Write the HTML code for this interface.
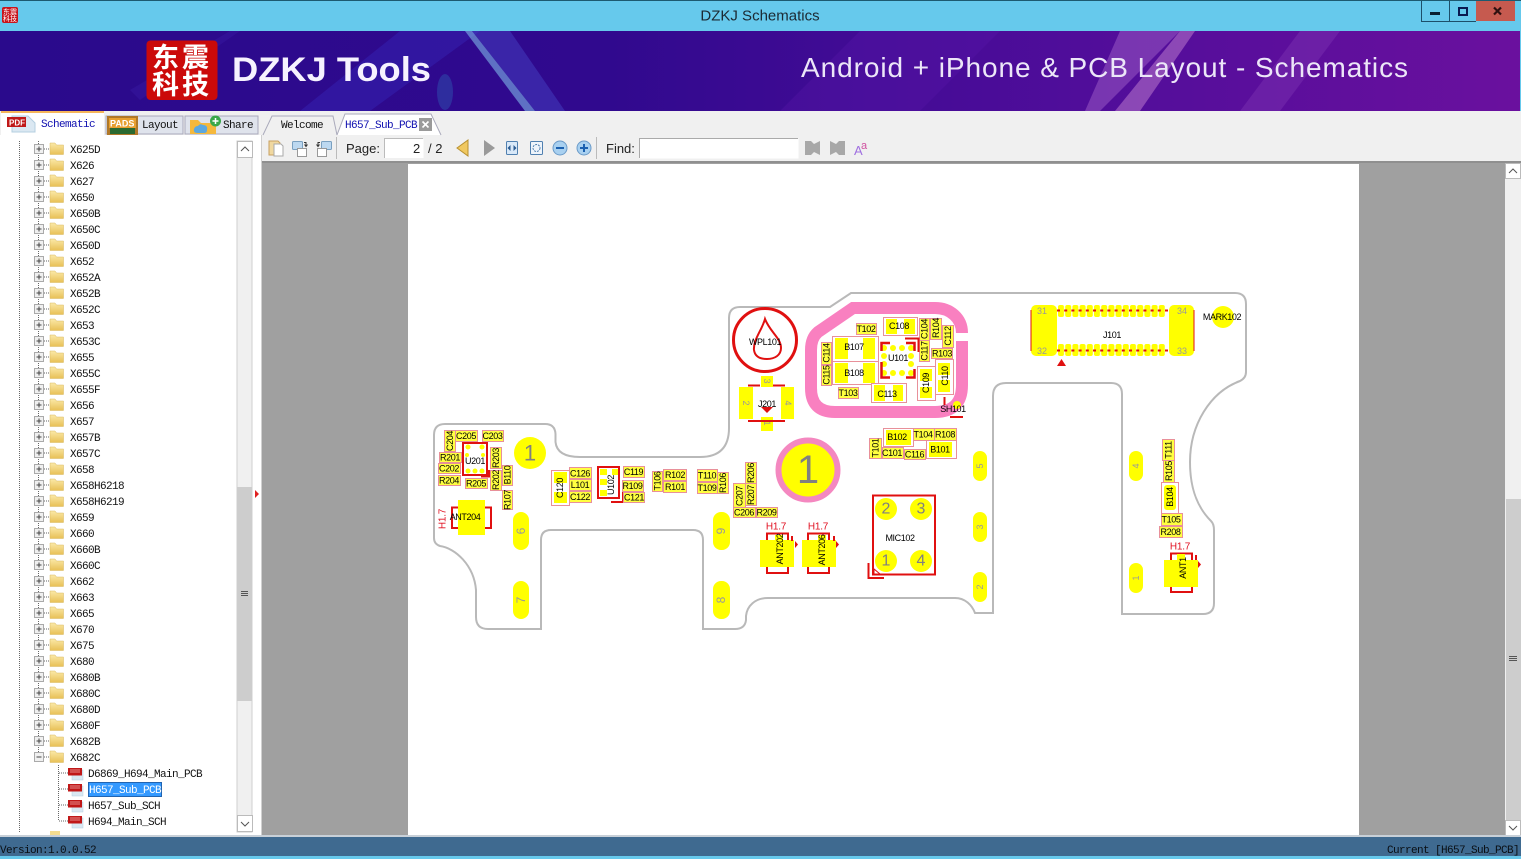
<!DOCTYPE html>
<html><head><meta charset="utf-8"><title>DZKJ Schematics</title>
<style>
html,body{margin:0;padding:0;background:#66c9ec;width:1521px;height:859px;overflow:hidden}
svg{display:block;position:absolute;left:0;top:0}
.m{font-family:"Liberation Mono",monospace;font-size:11px;letter-spacing:-.6px;fill:#111}
.s{font-family:"Liberation Sans",sans-serif;font-size:13px;fill:#222}
.t{font-family:"Liberation Sans",sans-serif;font-size:9px;letter-spacing:-.4px;fill:#000;text-anchor:middle;dominant-baseline:central}
.n{font-family:"Liberation Sans",sans-serif;font-size:9px;fill:#999;text-anchor:middle;dominant-baseline:central}
.h{font-family:"Liberation Sans",sans-serif;font-size:10px;letter-spacing:-.2px;fill:#e01020;text-anchor:middle;dominant-baseline:central}
.b{font-family:"Liberation Sans",sans-serif;fill:#808080;text-anchor:middle;dominant-baseline:central}
.l{fill:#ffff40;stroke:#e8909a;stroke-width:1}
.o{fill:#fff;stroke:#e8909a;stroke-width:1}
.y{fill:#ffff00}
.r{fill:none;stroke:#e01010;stroke-width:2}
.d{stroke:#666;stroke-width:1;stroke-dasharray:1 1;fill:none}
</style></head><body>
<svg width="1521" height="859" viewBox="0 0 1521 859" xmlns="http://www.w3.org/2000/svg">
<defs>
<linearGradient id="bn" x1="0" x2="1" y1="0" y2="0"><stop offset="0" stop-color="#2a0a8c"/><stop offset=".4" stop-color="#30098e"/><stop offset=".7" stop-color="#4f0d9a"/><stop offset="1" stop-color="#6a109e"/></linearGradient>
<linearGradient id="fd" x1="0" x2="0" y1="0" y2="1"><stop offset="0" stop-color="#fbe9a8"/><stop offset="1" stop-color="#e8c056"/></linearGradient>
<pattern id="th" x="1058" y="305" width="7.2" height="39" patternUnits="userSpaceOnUse"><rect width="6" height="12" rx="2" fill="#ffff00"/></pattern>
<g id="f"><path d="M50 -6h5l1.500 2h7v9.500h-13.500z" fill="url(#fd)" stroke="#d8b860" stroke-width=".5"/></g>
<g id="e"><rect x="34.500" y="-4.500" width="9" height="9" fill="#f0f0f0" stroke="#aaa"/><path d="M36.500 0h5M39 -2.500v5" stroke="#444"/><path d="M44 0h6" class="d"/><use href="#f"/></g>
<g id="c"><rect x="34.500" y="-4.500" width="9" height="9" fill="#f0f0f0" stroke="#aaa"/><path d="M36.500 0h5" stroke="#444"/><path d="M44 0h6" class="d"/><use href="#f"/></g>
<g id="p"><path d="M59 0h9" class="d"/><rect x="72" y="-3" width="11" height="10" fill="#d9e8f2" stroke="#b5cfe0" stroke-width=".5"/><rect x="68" y="-5" width="14" height="7.500" fill="#c01818"/><path d="M70 -3h10M70 -1h10" stroke="#f2b0b0" stroke-width=".8"/></g>
</defs>

<!-- title bar -->
<rect width="1521" height="859" fill="#66c9ec"/>
<rect width="1521" height="1" fill="#1d5a70"/>
<rect x="2" y="7" width="16" height="16" rx="2" fill="#c8141c"/>
<text x="3" y="14" font-family="'Noto Sans CJK SC',sans-serif" font-size="7" fill="#fff">东震</text>
<text x="3" y="21" font-family="'Noto Sans CJK SC',sans-serif" font-size="7" fill="#fff">科技</text>
<text x="760" y="20.500" text-anchor="middle" font-family="'Liberation Sans',sans-serif" font-size="15" fill="#1c2a33">DZKJ Schematics</text>
<rect x="1476" y="1" width="39" height="20" fill="#c65a4f"/>
<path d="M1421.500 1V21.500H1476M1449.500 1V21.500" fill="none" stroke="#1d4f6a"/>
<rect x="1430" y="12" width="10" height="3" fill="#0a2030"/>
<rect x="1459" y="8" width="8" height="7" fill="none" stroke="#0a1a50" stroke-width="2"/>
<path d="M1494 7.500l7 7M1501 7.500l-7 7" stroke="#301010" stroke-width="2.200"/>

<!-- banner -->
<rect x="0" y="31" width="1520" height="80" fill="url(#bn)"/>
<path d="M300 111L400 31H480L370 111Z" fill="#3420b0" opacity=".55"/>
<path d="M130 90L230 31H240L140 100Z" fill="#3c20a8" opacity=".35"/>
<path d="M465 31H472L535 111H525Z" fill="#7fb8e8" opacity=".6"/>
<path d="M472 31H510L565 111H535Z" fill="#4a50d0" opacity=".4"/>
<ellipse cx="445" cy="92" rx="8" ry="18" fill="#2f80c8" opacity=".3"/>
<path d="M1120 31H1180L1100 111H1085Z" fill="#a060c8" opacity=".5"/>
<path d="M1180 31H1195L1140 111H1115Z" fill="#d090d8" opacity=".45"/>
<path d="M1300 31H1340L1280 111H1240Z" fill="#7a30b0" opacity=".5"/>
<path d="M780 111L860 31H1000L920 111Z" fill="#5a18a8" opacity=".35"/>
<rect x="146.500" y="40.500" width="71" height="59.500" rx="4" fill="#cb0a0a"/>
<text x="152" y="67" font-family="'Noto Sans CJK SC',sans-serif" font-weight="700" font-size="27" letter-spacing="3" fill="#fff">东震</text>
<text x="152" y="94" font-family="'Noto Sans CJK SC',sans-serif" font-weight="700" font-size="27" letter-spacing="3" fill="#fff">科技</text>
<text x="232" y="81" font-family="'Liberation Sans',sans-serif" font-weight="700" font-size="34" fill="#f6f2ff" textLength="199" lengthAdjust="spacingAndGlyphs">DZKJ Tools</text>
<text x="801" y="77" font-family="'Liberation Sans',sans-serif" font-size="28" fill="#ece6f8" textLength="607" lengthAdjust="spacing">Android + iPhone &amp; PCB Layout - Schematics</text>

<!-- tabs row -->
<rect x="0" y="111" width="1521" height="726" fill="#f0f0f0"/>
<rect x="1" y="112" width="103" height="24" fill="#fff"/>
<rect x="1" y="111" width="103" height="2" fill="#f5b55a"/>
<path d="M106 134V116h77v18zM185 134V116h73v18z" fill="#dfe3ec" stroke="#aab"/>
<path d="M12 128V116h16l7 7v9H12z" fill="#dbe8f2" stroke="#b5cfe0"/>
<rect x="7" y="117" width="19" height="10" fill="#c01818"/>
<text x="9" y="125.500" font-family="'Liberation Sans',sans-serif" font-size="8" font-weight="700" fill="#fff">PDF</text>
<text x="41" y="127" class="m" style="fill:#1010b0">Schematic</text>
<rect x="107" y="116" width="31" height="19" fill="#b07828"/>
<rect x="109" y="118" width="27" height="10" fill="#e8a030"/>
<rect x="110" y="128" width="25" height="6" fill="#2a6a30"/>
<text x="110" y="126.500" font-family="'Liberation Sans',sans-serif" font-size="9" font-weight="700" fill="#fff">PADS</text>
<text x="142" y="128" class="m">Layout</text>
<path d="M190 120h8l3 3h15v11h-26z" fill="#f5b83c"/>
<path d="M198 133q-5 0 -4 -4q1 -3 4 -3q2 -3 5 -1q5 0 4 5q0 3 -3 3z" fill="#5ca8e0"/>
<circle cx="215.500" cy="121" r="5.500" fill="#3aa84a"/>
<path d="M212.500 121h6M215.500 118v6" stroke="#fff" stroke-width="1.500"/>
<text x="223" y="128" class="m">Share</text>
<path d="M263 135L272 116H333L337 135" fill="#f0f0f0" stroke="#aab"/>
<path d="M337 135L345 114H431L441 135" fill="#fff" stroke="#aab"/>
<text x="281" y="128" class="m">Welcome</text>
<text x="345" y="128" class="m" style="fill:#1010b0">H657_Sub_PCB</text>
<rect x="419" y="118" width="13" height="13" fill="#9a9a9a"/>
<path d="M422.500 121.500l6 6M428.500 121.500l-6 6" stroke="#fff" stroke-width="1.600"/>

<!-- tree -->
<rect x="0" y="135" width="261" height="700" fill="#fff"/>
<rect x="261" y="135" width="1" height="700" fill="#d0d0d0"/>
<path d="M19.500 141V832M38.500 141V757" class="d"/>
<path d="M58.500 765V821" class="d"/>
<use href="#e" y="149"/><text x="70" y="153" class="m">X625D</text>
<use href="#e" y="165"/><text x="70" y="169" class="m">X626</text>
<use href="#e" y="181"/><text x="70" y="185" class="m">X627</text>
<use href="#e" y="197"/><text x="70" y="201" class="m">X650</text>
<use href="#e" y="213"/><text x="70" y="217" class="m">X650B</text>
<use href="#e" y="229"/><text x="70" y="233" class="m">X650C</text>
<use href="#e" y="245"/><text x="70" y="249" class="m">X650D</text>
<use href="#e" y="261"/><text x="70" y="265" class="m">X652</text>
<use href="#e" y="277"/><text x="70" y="281" class="m">X652A</text>
<use href="#e" y="293"/><text x="70" y="297" class="m">X652B</text>
<use href="#e" y="309"/><text x="70" y="313" class="m">X652C</text>
<use href="#e" y="325"/><text x="70" y="329" class="m">X653</text>
<use href="#e" y="341"/><text x="70" y="345" class="m">X653C</text>
<use href="#e" y="357"/><text x="70" y="361" class="m">X655</text>
<use href="#e" y="373"/><text x="70" y="377" class="m">X655C</text>
<use href="#e" y="389"/><text x="70" y="393" class="m">X655F</text>
<use href="#e" y="405"/><text x="70" y="409" class="m">X656</text>
<use href="#e" y="421"/><text x="70" y="425" class="m">X657</text>
<use href="#e" y="437"/><text x="70" y="441" class="m">X657B</text>
<use href="#e" y="453"/><text x="70" y="457" class="m">X657C</text>
<use href="#e" y="469"/><text x="70" y="473" class="m">X658</text>
<use href="#e" y="485"/><text x="70" y="489" class="m">X658H6218</text>
<use href="#e" y="501"/><text x="70" y="505" class="m">X658H6219</text>
<use href="#e" y="517"/><text x="70" y="521" class="m">X659</text>
<use href="#e" y="533"/><text x="70" y="537" class="m">X660</text>
<use href="#e" y="549"/><text x="70" y="553" class="m">X660B</text>
<use href="#e" y="565"/><text x="70" y="569" class="m">X660C</text>
<use href="#e" y="581"/><text x="70" y="585" class="m">X662</text>
<use href="#e" y="597"/><text x="70" y="601" class="m">X663</text>
<use href="#e" y="613"/><text x="70" y="617" class="m">X665</text>
<use href="#e" y="629"/><text x="70" y="633" class="m">X670</text>
<use href="#e" y="645"/><text x="70" y="649" class="m">X675</text>
<use href="#e" y="661"/><text x="70" y="665" class="m">X680</text>
<use href="#e" y="677"/><text x="70" y="681" class="m">X680B</text>
<use href="#e" y="693"/><text x="70" y="697" class="m">X680C</text>
<use href="#e" y="709"/><text x="70" y="713" class="m">X680D</text>
<use href="#e" y="725"/><text x="70" y="729" class="m">X680F</text>
<use href="#e" y="741"/><text x="70" y="745" class="m">X682B</text>
<use href="#c" y="757"/><text x="70" y="761" class="m">X682C</text>
<use href="#p" y="773"/><text x="88" y="777" class="m">D6869_H694_Main_PCB</text>
<rect x="88" y="782" width="74" height="15" fill="#3399ff"/>
<rect x="88.500" y="782.500" width="73" height="14" fill="none" stroke="#103060" stroke-dasharray="1 1"/>
<use href="#p" y="789"/><text x="89" y="793" class="m" style="fill:#fff">H657_Sub_PCB</text>
<use href="#p" y="805"/><text x="88" y="809" class="m">H657_Sub_SCH</text>
<use href="#p" y="821"/><text x="88" y="825" class="m">H694_Main_SCH</text>
<rect x="50" y="831" width="10" height="4" fill="#f3dc90"/>
<!-- tree scrollbar -->
<rect x="237" y="141" width="15" height="691" fill="#f0f0f0" stroke="#cfcfcf"/>
<rect x="237.500" y="141.500" width="15" height="16" fill="#fff" stroke="#bbb"/>
<rect x="237.500" y="815.500" width="15" height="16" fill="#fff" stroke="#bbb"/>
<path d="M241 151l4 -4l4 4M241 822l4 4l4 -4" fill="none" stroke="#555"/>
<rect x="237" y="487" width="15" height="214" fill="#cdcdcd"/>
<path d="M241 591.500h7M241 593.500h7M241 595.500h7" stroke="#555"/>
<path d="M255 490l4 4l-4 4z" fill="#e02020"/>

<!-- toolbar -->
<path d="M269 141h9l2 2v12h-11z" fill="#f0d8a0" stroke="#c8a060"/>
<path d="M274 144h7l2 2v10h-9z" fill="#fff" stroke="#aaa"/>
<rect x="292.500" y="141.500" width="10" height="8" rx="1" fill="#bcd8f0" stroke="#7aa0c0"/>
<rect x="297.500" y="148.500" width="9" height="8" fill="#fff" stroke="#999"/>
<path d="M304 142.500h2v3M304.500 144.500l1.500 2l1.500 -2" fill="none" stroke="#333"/>
<rect x="321.500" y="141.500" width="10" height="8" rx="1" fill="#bcd8f0" stroke="#7aa0c0"/>
<rect x="317.500" y="148.500" width="9" height="8" fill="#fff" stroke="#999"/>
<path d="M320 142.500h-2v3M316.500 144.500l1.500 2l1.500 -2" fill="none" stroke="#333"/>
<rect x="336" y="137" width="1" height="22" fill="#bbb"/>
<text x="346" y="153" class="s">Page:</text>
<rect x="384.500" y="139" width="39" height="19" fill="#fff"/>
<path d="M384.500 158V138.500H423" fill="none" stroke="#bbb"/>
<text x="413" y="153" class="s">2</text>
<text x="428" y="153" class="s">/ 2</text>
<path d="M468 140V156L457 148Z" fill="#f0c860" stroke="#b89030"/>
<path d="M484 140V156L495 148Z" fill="#9a9a9a"/>
<rect x="506.500" y="141.500" width="11" height="13" rx="1" fill="#d8e8f8" stroke="#5080b0"/>
<path d="M507.500 148l3 -3v6zM516.500 148l-3 -3v6z" fill="#2a5a90"/>
<rect x="530.500" y="141.500" width="12" height="13" rx="1" fill="#eef4fb" stroke="#5080b0"/>
<circle cx="536.500" cy="148" r="3.500" fill="none" stroke="#5080b0" stroke-dasharray="2 1"/>
<circle cx="560" cy="148" r="7" fill="#a8d0f0" stroke="#6a9ac8"/>
<path d="M556 148h8" stroke="#1a60b0" stroke-width="2"/>
<circle cx="584" cy="148" r="7" fill="#a8d0f0" stroke="#6a9ac8"/>
<path d="M580 148h8M584 144v8" stroke="#1a60b0" stroke-width="2"/>
<rect x="596" y="137" width="1" height="22" fill="#bbb"/>
<text x="606" y="153" class="s">Find:</text>
<rect x="639.500" y="138.500" width="159" height="20" fill="#fff"/>
<path d="M639.500 158V138.500H798" fill="none" stroke="#aaa"/>
<path d="M805 141H811L814 144L820 141V155L814 152L811 155H805Z" fill="#a8a8a8"/>
<path d="M845 141H839L836 144L830 141V155L836 152L839 155H845Z" fill="#a8a8a8"/>
<text x="854" y="155" font-family="'Liberation Sans',sans-serif" font-size="13" fill="#a070e0">A</text>
<text x="861" y="149" font-family="'Liberation Sans',sans-serif" font-size="11" fill="#d050a0">a</text>

<!-- viewer -->
<rect x="262" y="161" width="1243" height="675" fill="#a0a0a0"/>
<rect x="262" y="161" width="1259" height="2" fill="#8f8f8f"/>
<rect x="408" y="164" width="951" height="671" fill="#fff"/>
<rect x="1505" y="163" width="16" height="673" fill="#f0f0f0"/>
<rect x="1505.500" y="163.500" width="15" height="15" fill="#fff" stroke="#bbb"/>
<rect x="1505.500" y="820.500" width="15" height="15" fill="#fff" stroke="#bbb"/>
<path d="M1509 173l4 -4l4 4M1509 826l4 4l4 -4" fill="none" stroke="#555"/>
<rect x="1506" y="499" width="15" height="321" fill="#cdcdcd"/>
<path d="M1509 656.500h8M1509 658.500h8M1509 660.500h8" stroke="#555"/>

<!-- PCB outline -->
<path d="M445 424H545Q555 424 555.500 434V442Q557 457 580 457H700Q729 457 729 428V318Q729 307 740 307H830L851 293H1235Q1246 293 1246 304V372Q1246 378 1240 381C1210 392 1190 425 1190 462C1190 490 1198 508 1211 521Q1214 524 1214 530V603Q1214 614 1203 614H1122V394Q1122 383 1111 383H1006Q993 383 993 396V613H975C972 605 965 598 955 598H768C755 598 747 606 746 616V620Q745 629 735 629H703V540Q703 530 693 530H551Q541 530 541 540V629H488Q476 629 476 617V590C474 565 455 548 440 546Q434 544 434 538V435Q434 424 445 424Z" fill="none" stroke="#b9b9b9" stroke-width="2"/>

<!-- pink shield -->
<path d="M962 333C962 318 950 308 935 308H853L818 332Q811 338 811 350V388Q811 412 835 412H935Q962 412 962 385V341" fill="none" stroke="#f980c0" stroke-width="12"/>

<!-- big 1 and small 1 -->
<circle cx="808" cy="470" r="29.500" fill="#ffff00" stroke="#f488c0" stroke-width="6"/>
<text x="808" y="470" class="b" font-size="40">1</text>
<circle cx="530" cy="453" r="16" fill="#ffff00"/>
<text x="530" y="453" class="b" font-size="22">1</text>

<!-- numbered pads -->
<rect x="513" y="512" width="16" height="38" rx="8" class="y"/><text class="n" transform="rotate(-90 521 531)" x="521" y="531" style="font-size:12px">6</text>
<rect x="513" y="581" width="16" height="38" rx="8" class="y"/><text class="n" transform="rotate(-90 521 600)" x="521" y="600" style="font-size:12px">7</text>
<rect x="713" y="512" width="17" height="38" rx="8" class="y"/><text class="n" transform="rotate(-90 721 531)" x="721" y="531" style="font-size:12px">9</text>
<rect x="713" y="581" width="17" height="38" rx="8" class="y"/><text class="n" transform="rotate(-90 721 600)" x="721" y="600" style="font-size:12px">8</text>
<rect x="973" y="451" width="14" height="30" rx="7" class="y"/><text class="n" transform="rotate(-90 980 466)" x="980" y="466">5</text>
<rect x="973" y="512" width="14" height="30" rx="7" class="y"/><text class="n" transform="rotate(-90 980 527)" x="980" y="527">3</text>
<rect x="973" y="572" width="14" height="30" rx="7" class="y"/><text class="n" transform="rotate(-90 980 587)" x="980" y="587">2</text>
<rect x="1129" y="451" width="14" height="30" rx="7" class="y"/><text class="n" transform="rotate(-90 1136 466)" x="1136" y="466">4</text>
<rect x="1129" y="563" width="14" height="30" rx="7" class="y"/><text class="n" transform="rotate(-90 1136 578)" x="1136" y="578">1</text>

<!-- left cluster -->
<rect class="l" x="444.500" y="430.500" width="11" height="21"/><text class="t" transform="rotate(-90 450 441)" x="450" y="441">C204</text>
<rect class="l" x="455.500" y="430.500" width="22" height="11"/><text class="t" x="466" y="436">C205</text>
<rect class="l" x="482.500" y="430.500" width="21" height="11"/><text class="t" x="492.500" y="436">C203</text>
<rect class="l" x="439.500" y="452.500" width="22" height="10"/><text class="t" x="450" y="457.500">R201</text>
<rect class="l" x="438.500" y="463.500" width="22" height="10"/><text class="t" x="449" y="468.500">C202</text>
<rect class="l" x="438.500" y="475.500" width="22" height="10"/><text class="t" x="449" y="480.500">R204</text>
<rect x="463" y="443" width="24" height="32" fill="#fff" stroke="#e01010" stroke-width="2"/>
<circle cx="468" cy="447" r="2.500" class="y"/><circle cx="482" cy="447" r="2.500" class="y"/><circle cx="468" cy="471" r="2.500" class="y"/><circle cx="475" cy="471" r="2.500" class="y"/><circle cx="482" cy="471" r="2.500" class="y"/><circle cx="467" cy="455" r="2" class="y"/><circle cx="483" cy="455" r="2" class="y"/>
<text class="t" x="475" y="461">U201</text>
<path d="M481 476.500H489V470" class="r"/>
<rect class="l" x="490.500" y="447.500" width="11" height="21"/><text class="t" transform="rotate(-90 496 458)" x="496" y="458">R203</text>
<rect class="l" x="490.500" y="470.500" width="11" height="20"/><text class="t" transform="rotate(-90 496 480)" x="496" y="480">R202</text>
<rect class="l" x="502.500" y="465.500" width="10" height="20"/><text class="t" transform="rotate(-90 507.500 475)" x="507.500" y="475">B110</text>
<rect class="l" x="502.500" y="490.500" width="10" height="19"/><text class="t" transform="rotate(-90 507.500 500)" x="507.500" y="500">R107</text>
<rect class="l" x="465.500" y="478.500" width="22" height="10"/><text class="t" x="476" y="483.500">R205</text>
<!-- ANT204 -->
<path d="M458 507.500H452V528H458M485 507.500H491V528H485" class="r"/>
<rect x="458" y="500" width="27" height="35" class="y"/>
<text class="t" x="465" y="517">ANT204</text>
<text class="h" transform="rotate(-90 443 519)" x="443" y="519">H1.7</text>

<!-- middle cluster -->
<rect class="o" x="551.500" y="470.500" width="18" height="35"/>
<rect x="554" y="472" width="13" height="11" class="y"/><rect x="554" y="492" width="13" height="11" class="y"/>
<text class="t" transform="rotate(-90 560 488)" x="560" y="488">C120</text>
<rect class="l" x="569.500" y="467.500" width="22" height="11"/><text class="t" x="580" y="473.500">C126</text>
<rect class="l" x="569.500" y="479.500" width="22" height="11"/><text class="t" x="580" y="485">L101</text>
<rect class="l" x="569.500" y="491.500" width="22" height="11"/><text class="t" x="580" y="497">C122</text>
<rect x="598" y="467" width="21" height="31" fill="#fff" stroke="#e01010" stroke-width="2"/>
<rect x="600" y="469" width="7" height="6" class="y"/><rect x="612" y="469" width="6" height="6" class="y"/><rect x="600" y="479" width="7" height="6" class="y"/><rect x="600" y="490" width="7" height="6" class="y"/>
<text class="t" transform="rotate(-90 611 485)" x="611" y="485">U102</text>
<path d="M611 502H623V492" class="r"/>
<rect class="l" x="623.500" y="466.500" width="21" height="11"/><text class="t" x="633.500" y="472">C119</text>
<rect class="l" x="622.500" y="480.500" width="21" height="11"/><text class="t" x="632.500" y="486">R109</text>
<rect class="l" x="623.500" y="492.500" width="21" height="10"/><text class="t" x="634" y="497.500">C121</text>
<rect class="l" x="652.500" y="471.500" width="10" height="20"/><text class="t" transform="rotate(-90 657.500 481)" x="657.500" y="481">T106</text>
<rect class="l" x="663.500" y="469.500" width="23" height="11"/><text class="t" x="675" y="475">R102</text>
<rect class="l" x="663.500" y="481.500" width="23" height="11"/><text class="t" x="675" y="487">R101</text>
<rect class="l" x="697.500" y="469.500" width="20" height="12"/><text class="t" x="707" y="475.500">T110</text>
<rect class="l" x="697.500" y="482.500" width="20" height="11"/><text class="t" x="707" y="488">T109</text>
<rect class="l" x="717.500" y="472.500" width="11" height="21"/><text class="t" transform="rotate(-90 723 483)" x="723" y="483">R106</text>
<rect class="l" x="745.500" y="462.500" width="11" height="21"/><text class="t" transform="rotate(-90 751 473)" x="751" y="473">R206</text>
<rect class="l" x="733.500" y="483.500" width="12" height="24"/><text class="t" transform="rotate(-90 739.500 496)" x="739.500" y="496">C207</text>
<rect class="l" x="745.500" y="483.500" width="11" height="22"/><text class="t" transform="rotate(-90 751 495)" x="751" y="495">R207</text>
<rect class="l" x="733.500" y="507.500" width="22" height="10"/><text class="t" x="744" y="512.500">C206</text>
<rect class="l" x="756.500" y="507.500" width="21" height="10"/><text class="t" x="766.500" y="512.500">R209</text>

<!-- WPL101 -->
<circle cx="765" cy="340" r="31.500" fill="none" stroke="#e01010" stroke-width="3"/>
<path d="M765 319C762 330 753 340 754 350C755 357 761 359 767 359C775 359 781 355 781 348C781 338 770 332 765 319Z" fill="none" stroke="#e01010" stroke-width="2"/>
<text class="t" x="765" y="342">WPL101</text>
<!-- J201 -->
<rect x="739" y="387" width="14" height="32" class="y"/><rect x="781" y="387" width="13" height="32" class="y"/>
<rect x="761" y="376" width="12" height="11" class="y"/><rect x="761" y="417" width="12" height="14" class="y"/>
<text class="n" transform="rotate(90 746 403)" x="746" y="403">2</text><text class="n" transform="rotate(90 788 403)" x="788" y="403">4</text>
<text class="n" transform="rotate(90 767 381)" x="767" y="381">3</text><text class="n" transform="rotate(90 767 423)" x="767" y="423">1</text>
<path d="M748 385.500H760M773 385.500H785M748 421H785" class="r"/>
<path d="M761 407H773L767 413Z" fill="#e01010"/>
<text class="t" x="767" y="404">J201</text>

<!-- shield contents -->
<rect class="o" x="832.500" y="336.500" width="46" height="25"/><rect x="835" y="338" width="13" height="21" class="y"/><rect x="863" y="338" width="12" height="21" class="y"/><text class="t" x="854" y="347">B107</text>
<rect class="o" x="832.500" y="361.500" width="46" height="23"/><rect x="835" y="363" width="13" height="20" class="y"/><rect x="863" y="363" width="12" height="20" class="y"/><text class="t" x="854" y="373">B108</text>
<rect class="l" x="821.500" y="342.500" width="10" height="22"/><text class="t" transform="rotate(-90 826.500 353)" x="826.500" y="353">C114</text>
<rect class="l" x="821.500" y="365.500" width="10" height="20"/><text class="t" transform="rotate(-90 826.500 375)" x="826.500" y="375">C115</text>
<rect class="l" x="856.500" y="323.500" width="20" height="11"/><text class="t" x="866" y="329">T102</text>
<rect class="l" x="838.500" y="387.500" width="20" height="11"/><text class="t" x="848" y="393">T103</text>
<rect class="o" x="883.500" y="317.500" width="34" height="18"/><rect x="886" y="319" width="11" height="15" class="y"/><rect x="904" y="319" width="11" height="15" class="y"/><text class="t" x="899" y="326">C108</text>
<rect class="l" x="919.500" y="318.500" width="10" height="22"/><text class="t" transform="rotate(-90 924.500 329)" x="924.500" y="329">C104</text>
<rect class="l" x="930.500" y="318.500" width="11" height="21"/><text class="t" transform="rotate(-90 936 328)" x="936" y="328">R104</text>
<rect class="l" x="942.500" y="325.500" width="11" height="22"/><text class="t" transform="rotate(-90 948 336)" x="948" y="336">C112</text>
<rect class="l" x="919.500" y="340.500" width="10" height="21"/><text class="t" transform="rotate(-90 924.500 351)" x="924.500" y="351">C117</text>
<rect class="l" x="931.500" y="348.500" width="21" height="10"/><text class="t" x="942" y="353.500">R103</text>
<rect x="881" y="342" width="34" height="36" fill="#fff"/>
<g class="y"><circle cx="884" cy="348" r="3"/><circle cx="893" cy="348" r="3"/><circle cx="902" cy="348" r="3"/><circle cx="911" cy="348" r="3"/><circle cx="884" cy="356" r="3"/><circle cx="911" cy="356" r="3"/><circle cx="884" cy="364" r="3"/><circle cx="911" cy="364" r="3"/><circle cx="884" cy="373" r="3"/><circle cx="893" cy="373" r="3"/><circle cx="902" cy="373" r="3"/><circle cx="911" cy="373" r="3"/></g>
<path d="M881.500 351V343H890M906 343H914.500V351M881.500 362V377.500H890M906 377.500H914.500V369" fill="none" stroke="#e01010" stroke-width="2.500"/>
<path d="M905 338.500H918.500V352" class="r"/>
<text class="t" x="898" y="358">U101</text>
<rect class="o" x="871.500" y="383.500" width="35" height="19"/><rect x="874" y="385" width="11" height="16" class="y"/><rect x="893" y="385" width="10" height="16" class="y"/><text class="t" x="887" y="394">C113</text>
<rect class="o" x="917.500" y="366.500" width="18" height="34"/><rect x="920" y="369" width="12" height="12" class="y"/><rect x="920" y="387" width="12" height="11" class="y"/><text class="t" transform="rotate(-90 926 383)" x="926" y="383">C109</text>
<rect class="o" x="935.500" y="359.500" width="18" height="35"/><rect x="938" y="363" width="12" height="12" class="y"/><rect x="938" y="380" width="12" height="12" class="y"/><text class="t" transform="rotate(-90 945 376)" x="945" y="376">C110</text>
<circle cx="957" cy="405" r="4" class="y"/>
<path d="M944.500 397V405M950 417H963" class="r"/>
<text class="t" x="953" y="409">SH101</text>

<!-- lower cluster -->
<rect class="l" x="869.500" y="438.500" width="12" height="20"/><text class="t" transform="rotate(-90 875.500 448)" x="875.500" y="448">T101</text>
<rect class="o" x="883.500" y="428.500" width="30" height="18"/><rect x="886" y="430" width="25" height="15" class="y"/><text class="t" x="897" y="437">B102</text>
<rect class="l" x="913.500" y="428.500" width="21" height="12"/><text class="t" x="923" y="434.500">T104</text>
<rect class="l" x="934.500" y="428.500" width="22" height="12"/><text class="t" x="945" y="434.500">R108</text>
<rect class="l" x="882.500" y="447.500" width="21" height="11"/><text class="t" x="892" y="453">C101</text>
<rect class="l" x="904.500" y="449.500" width="21" height="10"/><text class="t" x="914.500" y="454.500">C116</text>
<rect class="o" x="926.500" y="440.500" width="30" height="18"/><rect x="929" y="442" width="23" height="15" class="y"/><text class="t" x="940" y="449.500">B101</text>

<!-- J101 -->
<rect x="1031" y="305" width="26" height="51" rx="5" class="y"/>
<rect x="1169" y="305" width="25" height="51" rx="5" class="y"/>
<rect x="1058" y="305" width="108" height="12" fill="url(#th)"/>
<rect x="1058" y="344" width="108" height="12" fill="url(#th)"/>
<path d="M1057 310.500H1169M1057 350.500H1169" stroke="#e01010" stroke-width="2" stroke-dasharray="3 4.200" fill="none"/>
<path d="M1031 310V351M1194 310V351" stroke="#e01010" stroke-width="1" fill="none"/>
<text class="n" x="1042" y="311">31</text><text class="n" x="1042" y="351">32</text><text class="n" x="1182" y="311">34</text><text class="n" x="1182" y="351">33</text>
<text class="t" x="1112" y="335">J101</text>
<path d="M1061.500 359L1066 366H1057Z" fill="#e01010"/>
<circle cx="1223" cy="317" r="11" class="y"/>
<text class="t" x="1222" y="317">MARK102</text>

<!-- MIC102 -->
<rect x="873" y="495.500" width="62" height="79" fill="none" stroke="#e01010" stroke-width="2"/>
<circle cx="886" cy="509" r="11" class="y"/><circle cx="921" cy="509" r="11" class="y"/><circle cx="886" cy="561" r="11" class="y"/><circle cx="921" cy="561" r="11" class="y"/>
<text class="b" x="886" y="509" font-size="16">2</text><text class="b" x="921" y="509" font-size="16">3</text><text class="b" x="886" y="561" font-size="16">1</text><text class="b" x="921" y="561" font-size="16">4</text>
<text class="t" x="900" y="538">MIC102</text>
<path d="M868.500 563V578H884" class="r"/><path d="M874 569V574H880Z" fill="none" stroke="#e01010"/>

<!-- ANT202 / ANT206 -->
<path d="M767 540V533.500H788V540M767 567V573H788V567" class="r"/>
<rect x="760" y="540" width="34" height="27" class="y"/><rect x="775" y="535" width="8" height="6" class="y"/>
<path d="M792 536V541" class="r"/><path d="M795 541L798 544.500L795 548Z" fill="#e01010"/>
<text class="t" transform="rotate(-90 780 549)" x="780" y="549">ANT202</text>
<text class="h" x="776" y="527">H1.7</text>
<path d="M808 540V533.500H829V540M808 567V573H829V567" class="r"/>
<rect x="802" y="540" width="34" height="27" class="y"/><rect x="818" y="535" width="8" height="6" class="y"/>
<path d="M834 536V541" class="r"/><path d="M836 541L839 544.500L836 548Z" fill="#e01010"/>
<text class="t" transform="rotate(-90 822 550)" x="822" y="550">ANT206</text>
<text class="h" x="818" y="527">H1.7</text>

<!-- right cluster -->
<rect class="l" x="1162.500" y="439.500" width="12" height="21"/><text class="t" transform="rotate(-90 1168.500 450)" x="1168.500" y="450">T111</text>
<rect class="l" x="1163.500" y="460.500" width="11" height="22"/><text class="t" transform="rotate(-90 1169 471)" x="1169" y="471">R105</text>
<rect class="o" x="1161.500" y="482.500" width="17" height="31"/><rect x="1164" y="485" width="12" height="25" rx="3" class="y"/><text class="t" transform="rotate(-90 1170 497)" x="1170" y="497">B104</text>
<rect class="l" x="1161.500" y="513.500" width="21" height="12"/><text class="t" x="1171" y="519.500">T105</text>
<rect class="l" x="1159.500" y="526.500" width="23" height="11"/><text class="t" x="1170.500" y="532">R208</text>
<path d="M1171 560V553.500H1192V560M1171 587V592H1192V587" class="r"/>
<rect x="1164" y="560" width="34" height="27" class="y"/><rect x="1177" y="554" width="8" height="6" class="y"/>
<path d="M1196 555V560" class="r"/><path d="M1198 561L1201 564.500L1198 568Z" fill="#e01010"/>
<text class="t" transform="rotate(-90 1183 568)" x="1183" y="568">ANT1</text>
<text class="h" x="1180" y="547">H1.7</text>

<!-- status -->
<rect x="0" y="835" width="1521" height="2" fill="#c8d0d8"/>
<rect x="0" y="837" width="1521" height="19" fill="#3f6a90"/>
<rect x="0" y="856" width="1521" height="3" fill="#66c9ec"/>
<text x="0" y="853" class="m" style="fill:#0a0f14">Version:1.0.0.52</text>
<text x="1387" y="853" class="m" style="fill:#0a0f14">Current [H657_Sub_PCB]</text>
</svg>
</body></html>
